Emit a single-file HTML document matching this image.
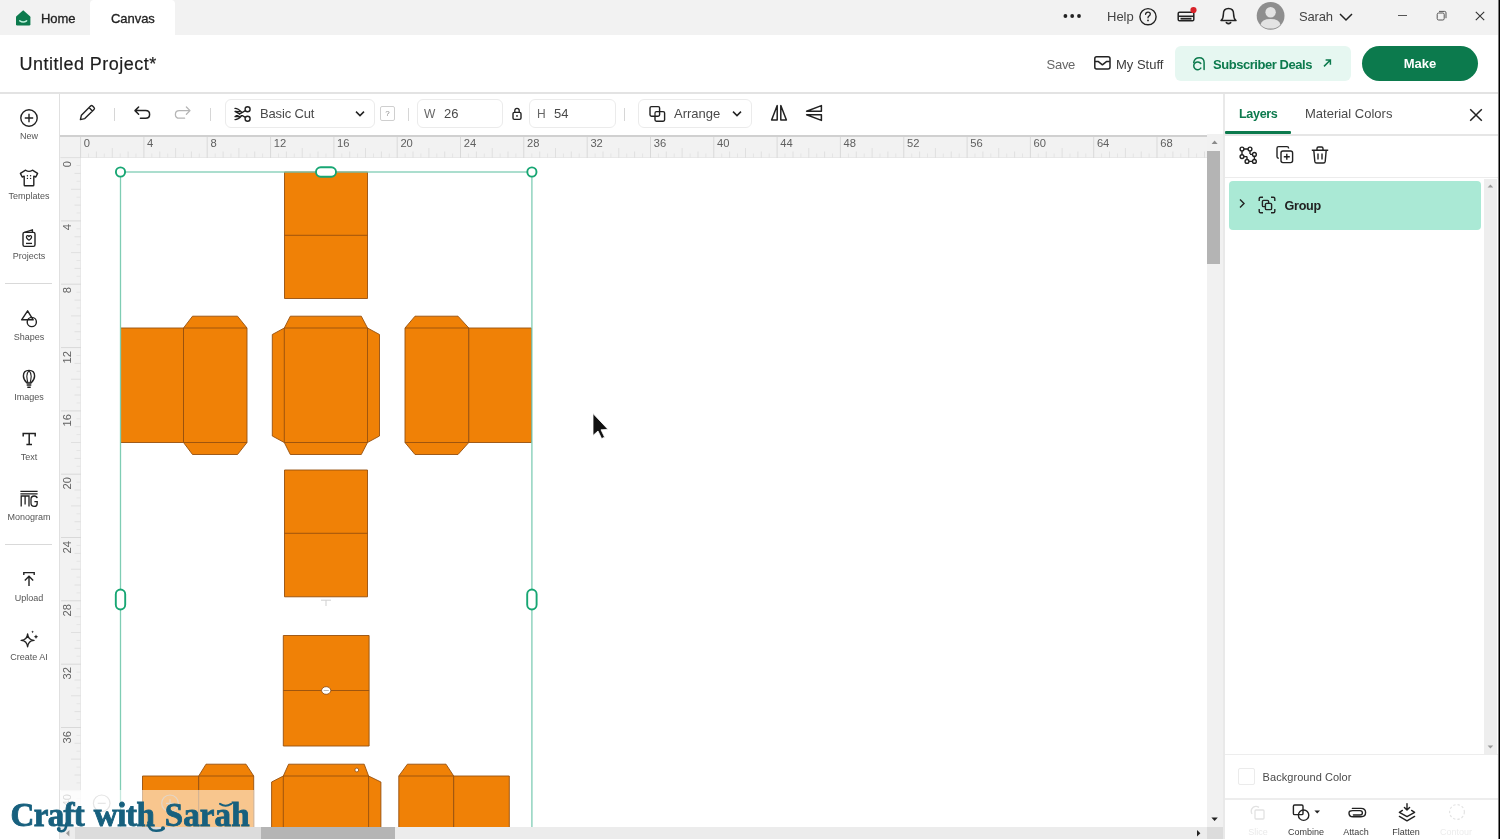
<!DOCTYPE html>
<html>
<head>
<meta charset="utf-8">
<title>Canvas</title>
<style>
*{box-sizing:border-box;margin:0;padding:0}
html,body{width:1500px;height:839px;overflow:hidden;background:#fff;font-family:"Liberation Sans",sans-serif;color:#2b2b2b}
.abs{position:absolute}
#app{position:relative;width:1500px;height:839px;overflow:hidden;will-change:transform}
/* top tab bar */
#tabbar{left:0;top:0;width:1500px;height:35px;background:#f2f2f2}
#tab-canvas{left:90px;top:0;width:85px;height:35px;background:#fff;border-radius:4px 4px 0 0}
.tabtxt{top:11.4px;font-size:13px;color:#222;letter-spacing:-0.05px;-webkit-text-stroke:0.3px currentColor}
/* header */
#header{z-index:5;left:0;top:35px;width:1500px;height:59px;background:#fff;border-bottom:2px solid #e3e3e3}
#title{left:19.6px;top:19px;font-size:18px;color:#1e1e1e;letter-spacing:0.47px;-webkit-text-stroke:0.2px #1e1e1e}
/* sidebar */
#sidebar{left:0;top:93px;width:60px;height:746px;background:#fff;border-right:1px solid #e0e0e0}
.sb-lab{left:0;width:58px;text-align:center;font-size:9px;color:#555}
.sb-ico{left:17px;width:24px;height:24px}
.sb-sep{left:5px;width:47px;height:1px;background:#d9d9d9}
/* toolbar */
#toolbar{left:60px;top:93px;width:1164px;height:42.4px;background:#fff}
.tsep{top:15px;width:1px;height:13px;background:#d6d6d6}
.tbox{top:6px;height:29px;border:1px solid #ebebeb;border-radius:6px;background:#fff}
.ttxt{font-size:13px;color:#4a4a4a;top:7px}
/* rulers */
#hruler{left:60px;top:135.2px;width:1147px;height:22.8px;background:#f2f2f2;border-top:2px solid #d0d0d0;border-bottom:1px solid #e8e8e8}
#vruler{left:60px;top:157.6px;width:20.6px;height:670px;background:#f2f2f2;border-right:1px solid #e8e8e8}
.rl{font-size:11.2px;color:#606060;line-height:13px;white-space:nowrap}
.vl{writing-mode:vertical-rl;transform:rotate(180deg);width:13px;text-align:left}
#canvas{left:80.6px;top:157.6px;width:1126px;height:670px;background:#fff;overflow:hidden}
/* scrollbars */
#vscroll{left:1207px;top:134px;width:16px;height:693px;background:#f1f1f1}
#hscroll{left:60px;top:827.2px;width:1147px;height:12px;background:#ececec}
/* right panel */
#panel{left:1223px;top:93px;width:277px;height:746px;background:#fff;border-left:2px solid #e9e9e9}
.bl{top:733.6px;width:50px;text-align:center;font-size:9px;color:#3c3c3c}
</style>
</head>
<body>
<div id="app">

<!-- TAB BAR -->
<div id="tabbar" class="abs"></div>
<div id="tab-canvas" class="abs"></div>
<!-- home icon -->
<svg class="abs" style="left:14px;top:8px" width="20" height="20" viewBox="14 8 20 20">
  <path d="M23.2 10.3 L30 16.2 Q30.4 16.6 30.4 17.2 V24.2 Q30.4 25.5 29.1 25.5 H17.3 Q16 25.5 16 24.2 V17.2 Q16 16.6 16.4 16.2 Z" fill="#0c7a4d"/>
  <path d="M19.8 20.8 Q23.2 23.2 26.6 20.8" stroke="#b9f1da" stroke-width="1.5" fill="none" stroke-linecap="round"/>
</svg>
<div class="abs tabtxt" style="left:41px">Home</div>
<div class="abs tabtxt" style="left:111px">Canvas</div>
<!-- right side of tabbar -->
<svg class="abs" style="left:1060px;top:0" width="440" height="35" viewBox="1060 0 440 35">
  <g fill="#222"><circle cx="1065.4" cy="16" r="1.9"/><circle cx="1072.2" cy="16" r="1.9"/><circle cx="1079" cy="16" r="1.9"/></g>
  <circle cx="1148" cy="16.7" r="8.1" fill="none" stroke="#222" stroke-width="1.4"/>
  <path d="M1145.6 14.3 Q1145.8 12.2 1148 12.2 Q1150.3 12.2 1150.3 14.1 Q1150.3 15.4 1148.9 16.1 Q1148 16.6 1148 17.8" fill="none" stroke="#222" stroke-width="1.3" stroke-linecap="round"/>
  <circle cx="1148" cy="20.4" r="0.9" fill="#222"/>
  <!-- machine icon -->
  <path d="M1179.5 12.2 H1192.5 Q1193.8 12.2 1193.8 13.5 V19.5 Q1193.8 20.8 1192.5 20.8 H1179.5 Q1178.2 20.8 1178.2 19.5 V13.5 Q1178.2 12.2 1179.5 12.2 Z M1178.2 16.2 H1193.8" fill="none" stroke="#222" stroke-width="1.5"/>
  <rect x="1180.5" y="17.8" width="11" height="1.8" fill="#222"/>
  <circle cx="1193.5" cy="10" r="3.1" fill="#d8232a"/>
  <!-- bell -->
  <path d="M1228.5 8.6 Q1233.6 8.6 1233.6 14 Q1233.6 18.6 1236 20.6 H1221 Q1223.4 18.6 1223.4 14 Q1223.4 8.6 1228.5 8.6 Z" fill="none" stroke="#222" stroke-width="1.5" stroke-linejoin="round"/>
  <path d="M1226.3 22.6 Q1228.5 24.6 1230.7 22.6" fill="none" stroke="#222" stroke-width="1.5" stroke-linecap="round"/>
  <!-- avatar -->
  <circle cx="1270.6" cy="15.8" r="13.9" fill="#8e8e8e"/>
  <circle cx="1270.6" cy="12.3" r="5.2" fill="#e3e3e3"/>
  <path d="M1260.6 24.7 Q1261.4 18.9 1270.6 18.9 Q1279.6 18.9 1280.4 24.7 Q1276.6 28.6 1270.6 28.6 Q1264.4 28.6 1260.6 24.7 Z" fill="#e3e3e3"/>
  <path d="M1340 14 L1346 20 L1352 14" fill="none" stroke="#222" stroke-width="1.5"/>
  <!-- window controls -->
  <path d="M1398 15.5 H1407" stroke="#555" stroke-width="1"/>
  <rect x="1437.2" y="13" width="7" height="7" rx="1.4" fill="none" stroke="#555" stroke-width="1"/>
  <path d="M1439 11.4 H1444.6 Q1446 11.4 1446 12.8 V18.2" fill="none" stroke="#555" stroke-width="1"/>
  <path d="M1475.8 11.8 L1484.2 20.2 M1484.2 11.8 L1475.8 20.2" stroke="#333" stroke-width="1.1"/>
</svg>
<div class="abs" style="left:1107px;top:9.2px;font-size:13px;color:#444">Help</div>
<div class="abs" style="left:1299px;top:9.2px;font-size:13px;color:#444;letter-spacing:-0.15px">Sarah</div>
<div id="header" class="abs">
  <div id="title" class="abs">Untitled Project*</div>
  <div class="abs" style="left:1046.6px;top:21.6px;font-size:13px;color:#666;letter-spacing:-0.3px">Save</div>
  <svg class="abs" style="left:1093px;top:19px" width="20" height="18" viewBox="0 0 20 18">
    <path d="M3.6 2.8 H15 Q17 2.8 17 4.8 V13 Q17 15 15 15 H3.6 Q1.8 15 1.8 13 V4.8 Q1.8 2.8 3.6 2.8 Z" fill="none" stroke="#222" stroke-width="1.5"/>
    <path d="M2 7.6 L5.4 7.6 L9.4 10.8 L13.4 7.6 L16.8 7.6" fill="none" stroke="#222" stroke-width="1.5" stroke-linejoin="round"/>
  </svg>
  <div class="abs" style="left:1116px;top:22px;font-size:13px;color:#3c3c3c">My Stuff</div>
  <div class="abs" style="left:1175px;top:11px;width:176px;height:35px;background:#e6f7f1;border-radius:6px"></div>
  <svg class="abs" style="left:1190px;top:21px" width="16" height="16" viewBox="0 0 16 16">
    <path d="M3.7 6.4 Q4.7 1.7 9.3 1.7 Q14.1 1.7 14.1 6.6 V13.4" fill="none" stroke="#0c7a4d" stroke-width="1.5" stroke-linecap="round"/>
    <path d="M10.8 7.5 A3.9 3.9 0 1 0 10.8 12.1" fill="none" stroke="#0c7a4d" stroke-width="1.5" stroke-linecap="round"/>
  </svg>
  <div class="abs" style="left:1213px;top:22px;font-size:13px;font-weight:bold;color:#0c7a4d;letter-spacing:-0.45px">Subscriber Deals</div>
  <svg class="abs" style="left:1320.6px;top:22px" width="12" height="12" viewBox="0 0 12 12">
    <path d="M3 9.4 L9.4 3 M4.6 3 H9.4 V7.8" fill="none" stroke="#0c7a4d" stroke-width="1.5"/>
  </svg>
  <div class="abs" style="left:1362px;top:11px;width:116px;height:35px;background:#0c7a4d;border-radius:18px;color:#fff;font-weight:bold;font-size:13px;text-align:center;line-height:35px">Make</div>
</div>
<div id="sidebar" class="abs">
  <!-- New -->
  <svg class="abs sb-ico" style="top:13px" viewBox="0 0 24 24"><circle cx="12" cy="12" r="8.2" fill="none" stroke="#222" stroke-width="1.4"/><path d="M12 7.8 V16.2 M7.8 12 H16.2" stroke="#222" stroke-width="1.4"/></svg>
  <div class="abs sb-lab" style="top:38px">New</div>
  <!-- Templates -->
  <svg class="abs sb-ico" style="top:73px" viewBox="0 0 24 24"><path d="M8.6 4.2 Q12 6.6 15.4 4.2 L20.6 7.4 L18.8 11 L16.8 10.2 V19 Q16.8 19.8 16 19.8 H8 Q7.2 19.8 7.2 19 V10.2 L5.2 11 L3.4 7.4 Z" fill="none" stroke="#222" stroke-width="1.4" stroke-linejoin="round"/><circle cx="10.4" cy="9.8" r="0.7" fill="#222"/><circle cx="13.6" cy="9.8" r="0.7" fill="#222"/><circle cx="10.4" cy="12.4" r="0.7" fill="#222"/><circle cx="13.6" cy="12.4" r="0.7" fill="#222"/></svg>
  <div class="abs sb-lab" style="top:98px">Templates</div>
  <!-- Projects -->
  <svg class="abs sb-ico" style="top:133px" viewBox="0 0 24 24"><path d="M7.4 6.4 L15.4 3.8 V6.4" fill="none" stroke="#222" stroke-width="1.4" stroke-linejoin="round"/><rect x="6" y="6.4" width="12" height="14" rx="1.6" fill="none" stroke="#222" stroke-width="1.4"/><path d="M12 14.2 Q8.6 11.8 9.6 10.2 Q10.8 9 12 10.6 Q13.2 9 14.4 10.2 Q15.4 11.8 12 14.2 Z" fill="none" stroke="#222" stroke-width="1.2" stroke-linejoin="round"/><path d="M9 17.4 H15" stroke="#222" stroke-width="1.3"/></svg>
  <div class="abs sb-lab" style="top:158px">Projects</div>
  <div class="abs sb-sep" style="top:190px"></div>
  <!-- Shapes -->
  <svg class="abs sb-ico" style="top:214px" viewBox="0 0 24 24"><path d="M10.6 3.8 L16.2 12.8 H4.6 Z" fill="none" stroke="#222" stroke-width="1.4" stroke-linejoin="round"/><circle cx="14.8" cy="15" r="4.6" fill="none" stroke="#222" stroke-width="1.4"/></svg>
  <div class="abs sb-lab" style="top:239px">Shapes</div>
  <!-- Images -->
  <svg class="abs sb-ico" style="top:274px" viewBox="0 0 24 24"><path d="M12 3.4 Q17.6 3.4 17.6 9 Q17.6 12.6 14 16 H10 Q6.4 12.6 6.4 9 Q6.4 3.4 12 3.4 Z" fill="none" stroke="#222" stroke-width="1.4"/><path d="M12 3.6 Q9.6 6 9.8 9.4 Q10 13 11 16 M12 3.6 Q14.4 6 14.2 9.4 Q14 13 13 16" fill="none" stroke="#222" stroke-width="1.1"/><path d="M10.2 18 H13.8 M10.8 20.2 H13.2" stroke="#222" stroke-width="1.4" stroke-linecap="round"/></svg>
  <div class="abs sb-lab" style="top:299px">Images</div>
  <!-- Text -->
  <svg class="abs" style="left:17px;top:334px" width="24" height="24" viewBox="0 0 24 24"><path d="M6.2 9.6 V6.4 H18.2 V9.6 M12.2 6.4 V17.6 M9.4 17.6 H15" fill="none" stroke="#222" stroke-width="1.5"/></svg>
  <div class="abs sb-lab" style="top:359px">Text</div>
  <!-- Monogram -->
  <svg class="abs sb-ico" style="top:394px" viewBox="0 0 24 24"><path d="M3.4 4.4 H20.6 M3.4 6.8 H20.6" stroke="#222" stroke-width="1.2"/><path d="M4.2 19.4 V9 H12 V19.4 M8.1 9 V17.4" fill="none" stroke="#222" stroke-width="1.3"/><path d="M20.2 11.2 Q19.8 9 17.2 9 Q14 9 14 12.4 V16 Q14 19.4 17.2 19.4 Q20.2 19.4 20.2 16.4 V14.6 H17.4" fill="none" stroke="#222" stroke-width="1.3"/></svg>
  <div class="abs sb-lab" style="top:419px">Monogram</div>
  <div class="abs sb-sep" style="top:451px"></div>
  <!-- Upload -->
  <svg class="abs sb-ico" style="top:474px" viewBox="0 0 24 24"><path d="M6.8 8 V5.6 H17.2 V8" fill="none" stroke="#222" stroke-width="1.4"/><path d="M12 19 V9.4 M7.8 13.4 L12 9.2 L16.2 13.4" fill="none" stroke="#222" stroke-width="1.4"/></svg>
  <div class="abs sb-lab" style="top:500px">Upload</div>
  <!-- Create AI -->
  <svg class="abs sb-ico" style="top:534px" viewBox="0 0 24 24"><path d="M10.6 7 Q11 12.8 17 13.4 Q11 14 10.6 19.8 Q10.2 14 4.2 13.4 Q10.2 12.8 10.6 7 Z" fill="none" stroke="#222" stroke-width="1.4" stroke-linejoin="round"/><path d="M15.6 3.4 Q15.8 4.6 17 4.8 Q15.8 5 15.6 6.2 Q15.4 5 14.2 4.8 Q15.4 4.6 15.6 3.4 Z M19 7.6 Q19.3 9.5 21.2 9.8 Q19.3 10.1 19 12 Q18.7 10.1 16.8 9.8 Q18.7 9.5 19 7.6 Z" fill="#222"/></svg>
  <div class="abs sb-lab" style="top:559px">Create AI</div>
</div>
<div id="toolbar" class="abs">
  <!-- pencil -->
  <svg class="abs" style="left:16px;top:9px" width="22" height="22" viewBox="0 0 22 22"><path d="M4.4 17.6 L5.4 13.2 L14.6 4 Q15.6 3 16.6 4 L18 5.4 Q19 6.4 18 7.4 L8.8 16.6 Z M13 5.6 L16.4 9" fill="none" stroke="#222" stroke-width="1.4" stroke-linejoin="round"/></svg>
  <div class="abs tsep" style="left:54px"></div>
  <!-- undo -->
  <svg class="abs" style="left:72px;top:10px" width="22" height="20" viewBox="0 0 22 20"><path d="M6.6 4 L3 7.6 L6.6 11.2 M3.4 7.6 H13.6 Q17.6 7.6 17.6 11.4 Q17.6 15.2 13.6 15.2 H8.4" fill="none" stroke="#222" stroke-width="1.5" stroke-linecap="round" stroke-linejoin="round"/></svg>
  <!-- redo -->
  <svg class="abs" style="left:111px;top:10px" width="22" height="20" viewBox="0 0 22 20"><path d="M15.4 4 L19 7.6 L15.4 11.2 M18.6 7.6 H8.4 Q4.4 7.6 4.4 11.4 Q4.4 15.2 8.4 15.2 H13.6" fill="none" stroke="#b5b5b5" stroke-width="1.3" stroke-linecap="round" stroke-linejoin="round"/></svg>
  <div class="abs tsep" style="left:150px"></div>
  <!-- basic cut -->
  <div class="abs tbox" style="left:165px;width:150px"></div>
  <svg class="abs" style="left:172px;top:11px" width="22" height="20" viewBox="0 0 22 20"><circle cx="15.6" cy="5.2" r="2.5" fill="none" stroke="#222" stroke-width="1.4"/><circle cx="15.6" cy="14.8" r="2.5" fill="none" stroke="#222" stroke-width="1.4"/><path d="M13.4 6.6 L3 12.6 L7.4 12.4 M13.4 13.4 L3 7.4 L7.4 7.6 M3 4.4 Q6 4.2 9.4 8 M3 15.6 Q6 15.8 9.4 12" fill="none" stroke="#222" stroke-width="1.3" stroke-linecap="round" stroke-linejoin="round"/></svg>
  <div class="abs ttxt" style="left:200px;top:13px;letter-spacing:-0.15px">Basic Cut</div>
  <svg class="abs" style="left:294px;top:16px" width="12" height="10" viewBox="0 0 12 10"><path d="M2 2.6 L6 6.6 L10 2.6" fill="none" stroke="#222" stroke-width="1.5"/></svg>
  <div class="abs" style="left:320px;top:13px;width:15px;height:15px;border:1px solid #cfcfcf;border-radius:2px;font-size:8px;color:#888;text-align:center;line-height:13px">?</div>
  <div class="abs tsep" style="left:348px"></div>
  <!-- W -->
  <div class="abs tbox" style="left:357px;width:86px"></div>
  <div class="abs ttxt" style="left:364px;top:14px;font-size:12px;color:#666">W</div>
  <div class="abs ttxt" style="left:384px;top:13px">26</div>
  <!-- lock -->
  <svg class="abs" style="left:450.2px;top:12.6px" width="14" height="16" viewBox="0 0 14 16"><rect x="3" y="6.4" width="8" height="7" rx="1.4" fill="none" stroke="#222" stroke-width="1.4"/><path d="M4.8 6.4 V4.6 Q4.8 2.4 7 2.4 Q9.2 2.4 9.2 4.6 V6.4" fill="none" stroke="#222" stroke-width="1.3"/><circle cx="7" cy="9.9" r="0.9" fill="#222"/></svg>
  <!-- H -->
  <div class="abs tbox" style="left:469px;width:87px"></div>
  <div class="abs ttxt" style="left:477px;top:14px;font-size:12px;color:#666">H</div>
  <div class="abs ttxt" style="left:494px;top:13px">54</div>
  <div class="abs tsep" style="left:564px"></div>
  <!-- arrange -->
  <div class="abs tbox" style="left:578px;width:114px"></div>
  <svg class="abs" style="left:587px;top:11px" width="20" height="20" viewBox="0 0 20 20"><rect x="8" y="7.6" width="9.6" height="9.6" rx="1.4" fill="none" stroke="#222" stroke-width="1.4"/><rect x="3" y="2.6" width="9.6" height="9.6" rx="1.4" fill="#fff" stroke="#222" stroke-width="1.4"/><path d="M8 12.2 V9 Q8 7.6 9.4 7.6 H12.6" fill="none" stroke="#222" stroke-width="1.2"/></svg>
  <div class="abs ttxt" style="left:614px;top:13px">Arrange</div>
  <svg class="abs" style="left:671px;top:16px" width="12" height="10" viewBox="0 0 12 10"><path d="M2 2.6 L6 6.6 L10 2.6" fill="none" stroke="#222" stroke-width="1.5"/></svg>
  <!-- flip icons -->
  <svg class="abs" style="left:709px;top:10px" width="20" height="20" viewBox="0 0 20 20"><path d="M8.2 2.6 V17 H2.6 Z M11.8 2.6 V17 H17.4 Z" fill="none" stroke="#222" stroke-width="1.5" stroke-linejoin="round"/></svg>
  <svg class="abs" style="left:744px;top:10px" width="20" height="20" viewBox="0 0 20 20"><path d="M2.6 8.2 H17.4 V2.6 Z M2.6 11.8 H17.4 V17.4 Z" fill="none" stroke="#222" stroke-width="1.5" stroke-linejoin="round"/></svg>
</div>
<div id="hruler" class="abs"></div>
<div id="vruler" class="abs"></div>
<div id="canvas" class="abs"></div>
<!-- RULERS -->
<svg class="abs" style="left:0;top:0" width="1500" height="839" viewBox="0 0 1500 839">
<defs><clipPath id="hr"><rect x="80" y="137" width="1127" height="21"/></clipPath><clipPath id="vr"><rect x="60" y="157.6" width="21" height="670"/></clipPath></defs>
<g clip-path="url(#hr)" stroke="#e0e0e0" stroke-width="1">
<line x1="80.6" y1="137" x2="80.6" y2="158" stroke="#d9d9d9"/>
<line x1="88.5" y1="153.5" x2="88.5" y2="158" stroke="#e5e5e5"/>
<line x1="96.4" y1="151.5" x2="96.4" y2="158"/>
<line x1="104.3" y1="153.5" x2="104.3" y2="158" stroke="#e5e5e5"/>
<line x1="112.3" y1="148" x2="112.3" y2="158"/>
<line x1="120.2" y1="153.5" x2="120.2" y2="158" stroke="#e5e5e5"/>
<line x1="128.1" y1="151.5" x2="128.1" y2="158"/>
<line x1="136.0" y1="153.5" x2="136.0" y2="158" stroke="#e5e5e5"/>
<line x1="143.9" y1="137" x2="143.9" y2="158" stroke="#d9d9d9"/>
<line x1="151.8" y1="153.5" x2="151.8" y2="158" stroke="#e5e5e5"/>
<line x1="159.8" y1="151.5" x2="159.8" y2="158"/>
<line x1="167.7" y1="153.5" x2="167.7" y2="158" stroke="#e5e5e5"/>
<line x1="175.6" y1="148" x2="175.6" y2="158"/>
<line x1="183.5" y1="153.5" x2="183.5" y2="158" stroke="#e5e5e5"/>
<line x1="191.4" y1="151.5" x2="191.4" y2="158"/>
<line x1="199.3" y1="153.5" x2="199.3" y2="158" stroke="#e5e5e5"/>
<line x1="207.2" y1="137" x2="207.2" y2="158" stroke="#d9d9d9"/>
<line x1="215.2" y1="153.5" x2="215.2" y2="158" stroke="#e5e5e5"/>
<line x1="223.1" y1="151.5" x2="223.1" y2="158"/>
<line x1="231.0" y1="153.5" x2="231.0" y2="158" stroke="#e5e5e5"/>
<line x1="238.9" y1="148" x2="238.9" y2="158"/>
<line x1="246.8" y1="153.5" x2="246.8" y2="158" stroke="#e5e5e5"/>
<line x1="254.7" y1="151.5" x2="254.7" y2="158"/>
<line x1="262.6" y1="153.5" x2="262.6" y2="158" stroke="#e5e5e5"/>
<line x1="270.6" y1="137" x2="270.6" y2="158" stroke="#d9d9d9"/>
<line x1="278.5" y1="153.5" x2="278.5" y2="158" stroke="#e5e5e5"/>
<line x1="286.4" y1="151.5" x2="286.4" y2="158"/>
<line x1="294.3" y1="153.5" x2="294.3" y2="158" stroke="#e5e5e5"/>
<line x1="302.2" y1="148" x2="302.2" y2="158"/>
<line x1="310.1" y1="153.5" x2="310.1" y2="158" stroke="#e5e5e5"/>
<line x1="318.0" y1="151.5" x2="318.0" y2="158"/>
<line x1="326.0" y1="153.5" x2="326.0" y2="158" stroke="#e5e5e5"/>
<line x1="333.9" y1="137" x2="333.9" y2="158" stroke="#d9d9d9"/>
<line x1="341.8" y1="153.5" x2="341.8" y2="158" stroke="#e5e5e5"/>
<line x1="349.7" y1="151.5" x2="349.7" y2="158"/>
<line x1="357.6" y1="153.5" x2="357.6" y2="158" stroke="#e5e5e5"/>
<line x1="365.5" y1="148" x2="365.5" y2="158"/>
<line x1="373.5" y1="153.5" x2="373.5" y2="158" stroke="#e5e5e5"/>
<line x1="381.4" y1="151.5" x2="381.4" y2="158"/>
<line x1="389.3" y1="153.5" x2="389.3" y2="158" stroke="#e5e5e5"/>
<line x1="397.2" y1="137" x2="397.2" y2="158" stroke="#d9d9d9"/>
<line x1="405.1" y1="153.5" x2="405.1" y2="158" stroke="#e5e5e5"/>
<line x1="413.0" y1="151.5" x2="413.0" y2="158"/>
<line x1="420.9" y1="153.5" x2="420.9" y2="158" stroke="#e5e5e5"/>
<line x1="428.9" y1="148" x2="428.9" y2="158"/>
<line x1="436.8" y1="153.5" x2="436.8" y2="158" stroke="#e5e5e5"/>
<line x1="444.7" y1="151.5" x2="444.7" y2="158"/>
<line x1="452.6" y1="153.5" x2="452.6" y2="158" stroke="#e5e5e5"/>
<line x1="460.5" y1="137" x2="460.5" y2="158" stroke="#d9d9d9"/>
<line x1="468.4" y1="153.5" x2="468.4" y2="158" stroke="#e5e5e5"/>
<line x1="476.4" y1="151.5" x2="476.4" y2="158"/>
<line x1="484.3" y1="153.5" x2="484.3" y2="158" stroke="#e5e5e5"/>
<line x1="492.2" y1="148" x2="492.2" y2="158"/>
<line x1="500.1" y1="153.5" x2="500.1" y2="158" stroke="#e5e5e5"/>
<line x1="508.0" y1="151.5" x2="508.0" y2="158"/>
<line x1="515.9" y1="153.5" x2="515.9" y2="158" stroke="#e5e5e5"/>
<line x1="523.8" y1="137" x2="523.8" y2="158" stroke="#d9d9d9"/>
<line x1="531.8" y1="153.5" x2="531.8" y2="158" stroke="#e5e5e5"/>
<line x1="539.7" y1="151.5" x2="539.7" y2="158"/>
<line x1="547.6" y1="153.5" x2="547.6" y2="158" stroke="#e5e5e5"/>
<line x1="555.5" y1="148" x2="555.5" y2="158"/>
<line x1="563.4" y1="153.5" x2="563.4" y2="158" stroke="#e5e5e5"/>
<line x1="571.3" y1="151.5" x2="571.3" y2="158"/>
<line x1="579.2" y1="153.5" x2="579.2" y2="158" stroke="#e5e5e5"/>
<line x1="587.2" y1="137" x2="587.2" y2="158" stroke="#d9d9d9"/>
<line x1="595.1" y1="153.5" x2="595.1" y2="158" stroke="#e5e5e5"/>
<line x1="603.0" y1="151.5" x2="603.0" y2="158"/>
<line x1="610.9" y1="153.5" x2="610.9" y2="158" stroke="#e5e5e5"/>
<line x1="618.8" y1="148" x2="618.8" y2="158"/>
<line x1="626.7" y1="153.5" x2="626.7" y2="158" stroke="#e5e5e5"/>
<line x1="634.6" y1="151.5" x2="634.6" y2="158"/>
<line x1="642.6" y1="153.5" x2="642.6" y2="158" stroke="#e5e5e5"/>
<line x1="650.5" y1="137" x2="650.5" y2="158" stroke="#d9d9d9"/>
<line x1="658.4" y1="153.5" x2="658.4" y2="158" stroke="#e5e5e5"/>
<line x1="666.3" y1="151.5" x2="666.3" y2="158"/>
<line x1="674.2" y1="153.5" x2="674.2" y2="158" stroke="#e5e5e5"/>
<line x1="682.1" y1="148" x2="682.1" y2="158"/>
<line x1="690.1" y1="153.5" x2="690.1" y2="158" stroke="#e5e5e5"/>
<line x1="698.0" y1="151.5" x2="698.0" y2="158"/>
<line x1="705.9" y1="153.5" x2="705.9" y2="158" stroke="#e5e5e5"/>
<line x1="713.8" y1="137" x2="713.8" y2="158" stroke="#d9d9d9"/>
<line x1="721.7" y1="153.5" x2="721.7" y2="158" stroke="#e5e5e5"/>
<line x1="729.6" y1="151.5" x2="729.6" y2="158"/>
<line x1="737.5" y1="153.5" x2="737.5" y2="158" stroke="#e5e5e5"/>
<line x1="745.5" y1="148" x2="745.5" y2="158"/>
<line x1="753.4" y1="153.5" x2="753.4" y2="158" stroke="#e5e5e5"/>
<line x1="761.3" y1="151.5" x2="761.3" y2="158"/>
<line x1="769.2" y1="153.5" x2="769.2" y2="158" stroke="#e5e5e5"/>
<line x1="777.1" y1="137" x2="777.1" y2="158" stroke="#d9d9d9"/>
<line x1="785.0" y1="153.5" x2="785.0" y2="158" stroke="#e5e5e5"/>
<line x1="793.0" y1="151.5" x2="793.0" y2="158"/>
<line x1="800.9" y1="153.5" x2="800.9" y2="158" stroke="#e5e5e5"/>
<line x1="808.8" y1="148" x2="808.8" y2="158"/>
<line x1="816.7" y1="153.5" x2="816.7" y2="158" stroke="#e5e5e5"/>
<line x1="824.6" y1="151.5" x2="824.6" y2="158"/>
<line x1="832.5" y1="153.5" x2="832.5" y2="158" stroke="#e5e5e5"/>
<line x1="840.4" y1="137" x2="840.4" y2="158" stroke="#d9d9d9"/>
<line x1="848.4" y1="153.5" x2="848.4" y2="158" stroke="#e5e5e5"/>
<line x1="856.3" y1="151.5" x2="856.3" y2="158"/>
<line x1="864.2" y1="153.5" x2="864.2" y2="158" stroke="#e5e5e5"/>
<line x1="872.1" y1="148" x2="872.1" y2="158"/>
<line x1="880.0" y1="153.5" x2="880.0" y2="158" stroke="#e5e5e5"/>
<line x1="887.9" y1="151.5" x2="887.9" y2="158"/>
<line x1="895.8" y1="153.5" x2="895.8" y2="158" stroke="#e5e5e5"/>
<line x1="903.8" y1="137" x2="903.8" y2="158" stroke="#d9d9d9"/>
<line x1="911.7" y1="153.5" x2="911.7" y2="158" stroke="#e5e5e5"/>
<line x1="919.6" y1="151.5" x2="919.6" y2="158"/>
<line x1="927.5" y1="153.5" x2="927.5" y2="158" stroke="#e5e5e5"/>
<line x1="935.4" y1="148" x2="935.4" y2="158"/>
<line x1="943.3" y1="153.5" x2="943.3" y2="158" stroke="#e5e5e5"/>
<line x1="951.2" y1="151.5" x2="951.2" y2="158"/>
<line x1="959.2" y1="153.5" x2="959.2" y2="158" stroke="#e5e5e5"/>
<line x1="967.1" y1="137" x2="967.1" y2="158" stroke="#d9d9d9"/>
<line x1="975.0" y1="153.5" x2="975.0" y2="158" stroke="#e5e5e5"/>
<line x1="982.9" y1="151.5" x2="982.9" y2="158"/>
<line x1="990.8" y1="153.5" x2="990.8" y2="158" stroke="#e5e5e5"/>
<line x1="998.7" y1="148" x2="998.7" y2="158"/>
<line x1="1006.7" y1="153.5" x2="1006.7" y2="158" stroke="#e5e5e5"/>
<line x1="1014.6" y1="151.5" x2="1014.6" y2="158"/>
<line x1="1022.5" y1="153.5" x2="1022.5" y2="158" stroke="#e5e5e5"/>
<line x1="1030.4" y1="137" x2="1030.4" y2="158" stroke="#d9d9d9"/>
<line x1="1038.3" y1="153.5" x2="1038.3" y2="158" stroke="#e5e5e5"/>
<line x1="1046.2" y1="151.5" x2="1046.2" y2="158"/>
<line x1="1054.1" y1="153.5" x2="1054.1" y2="158" stroke="#e5e5e5"/>
<line x1="1062.1" y1="148" x2="1062.1" y2="158"/>
<line x1="1070.0" y1="153.5" x2="1070.0" y2="158" stroke="#e5e5e5"/>
<line x1="1077.9" y1="151.5" x2="1077.9" y2="158"/>
<line x1="1085.8" y1="153.5" x2="1085.8" y2="158" stroke="#e5e5e5"/>
<line x1="1093.7" y1="137" x2="1093.7" y2="158" stroke="#d9d9d9"/>
<line x1="1101.6" y1="153.5" x2="1101.6" y2="158" stroke="#e5e5e5"/>
<line x1="1109.5" y1="151.5" x2="1109.5" y2="158"/>
<line x1="1117.5" y1="153.5" x2="1117.5" y2="158" stroke="#e5e5e5"/>
<line x1="1125.4" y1="148" x2="1125.4" y2="158"/>
<line x1="1133.3" y1="153.5" x2="1133.3" y2="158" stroke="#e5e5e5"/>
<line x1="1141.2" y1="151.5" x2="1141.2" y2="158"/>
<line x1="1149.1" y1="153.5" x2="1149.1" y2="158" stroke="#e5e5e5"/>
<line x1="1157.0" y1="137" x2="1157.0" y2="158" stroke="#d9d9d9"/>
<line x1="1165.0" y1="153.5" x2="1165.0" y2="158" stroke="#e5e5e5"/>
<line x1="1172.9" y1="151.5" x2="1172.9" y2="158"/>
<line x1="1180.8" y1="153.5" x2="1180.8" y2="158" stroke="#e5e5e5"/>
<line x1="1188.7" y1="148" x2="1188.7" y2="158"/>
<line x1="1196.6" y1="153.5" x2="1196.6" y2="158" stroke="#e5e5e5"/>
<line x1="1204.5" y1="151.5" x2="1204.5" y2="158"/>
<line x1="1212.4" y1="153.5" x2="1212.4" y2="158" stroke="#e5e5e5"/>
<line x1="1220.4" y1="137" x2="1220.4" y2="158" stroke="#d9d9d9"/>
<line x1="1228.3" y1="153.5" x2="1228.3" y2="158" stroke="#e5e5e5"/>
<line x1="1236.2" y1="151.5" x2="1236.2" y2="158"/>
<line x1="1244.1" y1="153.5" x2="1244.1" y2="158" stroke="#e5e5e5"/>
<line x1="1252.0" y1="148" x2="1252.0" y2="158"/>
<line x1="1259.9" y1="153.5" x2="1259.9" y2="158" stroke="#e5e5e5"/>
</g>
<g clip-path="url(#vr)" stroke="#e0e0e0" stroke-width="1">
<line x1="61" y1="157.6" x2="81" y2="157.6" stroke="#d9d9d9"/>
<line x1="76.5" y1="165.5" x2="81" y2="165.5" stroke="#e5e5e5"/>
<line x1="74.5" y1="173.4" x2="81" y2="173.4"/>
<line x1="76.5" y1="181.3" x2="81" y2="181.3" stroke="#e5e5e5"/>
<line x1="71" y1="189.3" x2="81" y2="189.3"/>
<line x1="76.5" y1="197.2" x2="81" y2="197.2" stroke="#e5e5e5"/>
<line x1="74.5" y1="205.1" x2="81" y2="205.1"/>
<line x1="76.5" y1="213.0" x2="81" y2="213.0" stroke="#e5e5e5"/>
<line x1="61" y1="220.9" x2="81" y2="220.9" stroke="#d9d9d9"/>
<line x1="76.5" y1="228.8" x2="81" y2="228.8" stroke="#e5e5e5"/>
<line x1="74.5" y1="236.8" x2="81" y2="236.8"/>
<line x1="76.5" y1="244.7" x2="81" y2="244.7" stroke="#e5e5e5"/>
<line x1="71" y1="252.6" x2="81" y2="252.6"/>
<line x1="76.5" y1="260.5" x2="81" y2="260.5" stroke="#e5e5e5"/>
<line x1="74.5" y1="268.4" x2="81" y2="268.4"/>
<line x1="76.5" y1="276.3" x2="81" y2="276.3" stroke="#e5e5e5"/>
<line x1="61" y1="284.2" x2="81" y2="284.2" stroke="#d9d9d9"/>
<line x1="76.5" y1="292.2" x2="81" y2="292.2" stroke="#e5e5e5"/>
<line x1="74.5" y1="300.1" x2="81" y2="300.1"/>
<line x1="76.5" y1="308.0" x2="81" y2="308.0" stroke="#e5e5e5"/>
<line x1="71" y1="315.9" x2="81" y2="315.9"/>
<line x1="76.5" y1="323.8" x2="81" y2="323.8" stroke="#e5e5e5"/>
<line x1="74.5" y1="331.7" x2="81" y2="331.7"/>
<line x1="76.5" y1="339.6" x2="81" y2="339.6" stroke="#e5e5e5"/>
<line x1="61" y1="347.6" x2="81" y2="347.6" stroke="#d9d9d9"/>
<line x1="76.5" y1="355.5" x2="81" y2="355.5" stroke="#e5e5e5"/>
<line x1="74.5" y1="363.4" x2="81" y2="363.4"/>
<line x1="76.5" y1="371.3" x2="81" y2="371.3" stroke="#e5e5e5"/>
<line x1="71" y1="379.2" x2="81" y2="379.2"/>
<line x1="76.5" y1="387.1" x2="81" y2="387.1" stroke="#e5e5e5"/>
<line x1="74.5" y1="395.0" x2="81" y2="395.0"/>
<line x1="76.5" y1="403.0" x2="81" y2="403.0" stroke="#e5e5e5"/>
<line x1="61" y1="410.9" x2="81" y2="410.9" stroke="#d9d9d9"/>
<line x1="76.5" y1="418.8" x2="81" y2="418.8" stroke="#e5e5e5"/>
<line x1="74.5" y1="426.7" x2="81" y2="426.7"/>
<line x1="76.5" y1="434.6" x2="81" y2="434.6" stroke="#e5e5e5"/>
<line x1="71" y1="442.5" x2="81" y2="442.5"/>
<line x1="76.5" y1="450.5" x2="81" y2="450.5" stroke="#e5e5e5"/>
<line x1="74.5" y1="458.4" x2="81" y2="458.4"/>
<line x1="76.5" y1="466.3" x2="81" y2="466.3" stroke="#e5e5e5"/>
<line x1="61" y1="474.2" x2="81" y2="474.2" stroke="#d9d9d9"/>
<line x1="76.5" y1="482.1" x2="81" y2="482.1" stroke="#e5e5e5"/>
<line x1="74.5" y1="490.0" x2="81" y2="490.0"/>
<line x1="76.5" y1="497.9" x2="81" y2="497.9" stroke="#e5e5e5"/>
<line x1="71" y1="505.9" x2="81" y2="505.9"/>
<line x1="76.5" y1="513.8" x2="81" y2="513.8" stroke="#e5e5e5"/>
<line x1="74.5" y1="521.7" x2="81" y2="521.7"/>
<line x1="76.5" y1="529.6" x2="81" y2="529.6" stroke="#e5e5e5"/>
<line x1="61" y1="537.5" x2="81" y2="537.5" stroke="#d9d9d9"/>
<line x1="76.5" y1="545.4" x2="81" y2="545.4" stroke="#e5e5e5"/>
<line x1="74.5" y1="553.4" x2="81" y2="553.4"/>
<line x1="76.5" y1="561.3" x2="81" y2="561.3" stroke="#e5e5e5"/>
<line x1="71" y1="569.2" x2="81" y2="569.2"/>
<line x1="76.5" y1="577.1" x2="81" y2="577.1" stroke="#e5e5e5"/>
<line x1="74.5" y1="585.0" x2="81" y2="585.0"/>
<line x1="76.5" y1="592.9" x2="81" y2="592.9" stroke="#e5e5e5"/>
<line x1="61" y1="600.8" x2="81" y2="600.8" stroke="#d9d9d9"/>
<line x1="76.5" y1="608.8" x2="81" y2="608.8" stroke="#e5e5e5"/>
<line x1="74.5" y1="616.7" x2="81" y2="616.7"/>
<line x1="76.5" y1="624.6" x2="81" y2="624.6" stroke="#e5e5e5"/>
<line x1="71" y1="632.5" x2="81" y2="632.5"/>
<line x1="76.5" y1="640.4" x2="81" y2="640.4" stroke="#e5e5e5"/>
<line x1="74.5" y1="648.3" x2="81" y2="648.3"/>
<line x1="76.5" y1="656.2" x2="81" y2="656.2" stroke="#e5e5e5"/>
<line x1="61" y1="664.2" x2="81" y2="664.2" stroke="#d9d9d9"/>
<line x1="76.5" y1="672.1" x2="81" y2="672.1" stroke="#e5e5e5"/>
<line x1="74.5" y1="680.0" x2="81" y2="680.0"/>
<line x1="76.5" y1="687.9" x2="81" y2="687.9" stroke="#e5e5e5"/>
<line x1="71" y1="695.8" x2="81" y2="695.8"/>
<line x1="76.5" y1="703.7" x2="81" y2="703.7" stroke="#e5e5e5"/>
<line x1="74.5" y1="711.6" x2="81" y2="711.6"/>
<line x1="76.5" y1="719.6" x2="81" y2="719.6" stroke="#e5e5e5"/>
<line x1="61" y1="727.5" x2="81" y2="727.5" stroke="#d9d9d9"/>
<line x1="76.5" y1="735.4" x2="81" y2="735.4" stroke="#e5e5e5"/>
<line x1="74.5" y1="743.3" x2="81" y2="743.3"/>
<line x1="76.5" y1="751.2" x2="81" y2="751.2" stroke="#e5e5e5"/>
<line x1="71" y1="759.1" x2="81" y2="759.1"/>
<line x1="76.5" y1="767.1" x2="81" y2="767.1" stroke="#e5e5e5"/>
<line x1="74.5" y1="775.0" x2="81" y2="775.0"/>
<line x1="76.5" y1="782.9" x2="81" y2="782.9" stroke="#e5e5e5"/>
<line x1="61" y1="790.8" x2="81" y2="790.8" stroke="#d9d9d9"/>
<line x1="76.5" y1="798.7" x2="81" y2="798.7" stroke="#e5e5e5"/>
<line x1="74.5" y1="806.6" x2="81" y2="806.6"/>
<line x1="76.5" y1="814.5" x2="81" y2="814.5" stroke="#e5e5e5"/>
<line x1="71" y1="822.5" x2="81" y2="822.5"/>
<line x1="76.5" y1="830.4" x2="81" y2="830.4" stroke="#e5e5e5"/>
<line x1="74.5" y1="838.3" x2="81" y2="838.3"/>
<line x1="76.5" y1="846.2" x2="81" y2="846.2" stroke="#e5e5e5"/>
<line x1="61" y1="854.1" x2="81" y2="854.1" stroke="#d9d9d9"/>
<line x1="76.5" y1="862.0" x2="81" y2="862.0" stroke="#e5e5e5"/>
</g>
</svg>
<div class="abs rl" style="left:83.8px;top:137px">0</div>
<div class="abs rl" style="left:147.1px;top:137px">4</div>
<div class="abs rl" style="left:210.4px;top:137px">8</div>
<div class="abs rl" style="left:273.8px;top:137px">12</div>
<div class="abs rl" style="left:337.1px;top:137px">16</div>
<div class="abs rl" style="left:400.4px;top:137px">20</div>
<div class="abs rl" style="left:463.7px;top:137px">24</div>
<div class="abs rl" style="left:527.0px;top:137px">28</div>
<div class="abs rl" style="left:590.4px;top:137px">32</div>
<div class="abs rl" style="left:653.7px;top:137px">36</div>
<div class="abs rl" style="left:717.0px;top:137px">40</div>
<div class="abs rl" style="left:780.3px;top:137px">44</div>
<div class="abs rl" style="left:843.6px;top:137px">48</div>
<div class="abs rl" style="left:907.0px;top:137px">52</div>
<div class="abs rl" style="left:970.3px;top:137px">56</div>
<div class="abs rl" style="left:1033.6px;top:137px">60</div>
<div class="abs rl" style="left:1096.9px;top:137px">64</div>
<div class="abs rl" style="left:1160.2px;top:137px">68</div>
<div class="abs rl vl" style="left:61px;top:160.8px">0</div>
<div class="abs rl vl" style="left:61px;top:224.1px">4</div>
<div class="abs rl vl" style="left:61px;top:287.4px">8</div>
<div class="abs rl vl" style="left:61px;top:350.8px">12</div>
<div class="abs rl vl" style="left:61px;top:414.1px">16</div>
<div class="abs rl vl" style="left:61px;top:477.4px">20</div>
<div class="abs rl vl" style="left:61px;top:540.7px">24</div>
<div class="abs rl vl" style="left:61px;top:604.0px">28</div>
<div class="abs rl vl" style="left:61px;top:667.4px">32</div>
<div class="abs rl vl" style="left:61px;top:730.7px">36</div>
<div class="abs rl vl" style="left:61px;top:794.0px">40</div>

<!-- CANVAS SHAPES (page coords) -->
<svg class="abs" style="left:0;top:0" width="1500" height="839" viewBox="0 0 1500 839">
<defs><clipPath id="cv"><rect x="80.6" y="157.6" width="1126" height="669.4"/></clipPath></defs>
<g clip-path="url(#cv)" fill="#f08106" stroke="#96500f" stroke-width="0.9" stroke-linejoin="round">
  <!-- row1 rect -->
  <rect x="284.5" y="172" width="83" height="126.5"/>
  <line x1="284.5" y1="235.3" x2="367.5" y2="235.3"/>
  <!-- row2 left -->
  <rect x="120.5" y="328" width="63" height="114.5"/>
  <path d="M183.5 328 L192.5 316.2 L237.5 316.2 L247 328 L247 442.5 L237.5 454.5 L192.5 454.5 L183.5 442.5 Z"/>
  <path d="M183.5 328 H247 M183.5 442.5 H247" fill="none"/>
  <!-- row2 middle -->
  <path d="M284.3 328 L290.3 316.2 L361.3 316.2 L367.5 328 L379.5 334.5 L379.5 436 L367.5 442.5 L361.3 454.5 L290.3 454.5 L284.3 442.5 L272.3 436 L272.3 334.5 Z"/>
  <rect x="284.3" y="328" width="83.2" height="114.5" fill="none"/>
  <!-- row2 right -->
  <path d="M405 328 L415 316.2 L458 316.2 L468.8 328 L468.8 442.5 L458 454.5 L415 454.5 L405 442.5 Z"/>
  <path d="M405 328 H468.8 M405 442.5 H468.8" fill="none"/>
  <rect x="468.8" y="328" width="62.7" height="114.5"/>
  <!-- row3 rect -->
  <rect x="284.5" y="470" width="83" height="126.8"/>
  <line x1="284.5" y1="533.3" x2="367.5" y2="533.3"/>
  <!-- row4 rect -->
  <rect x="283.3" y="635.5" width="85.8" height="110.5"/>
  <line x1="283.3" y1="690.5" x2="369.1" y2="690.5"/>
  <!-- row5 left -->
  <rect x="142.5" y="776" width="56.2" height="60"/>
  <path d="M198.7 776 L206 764.2 L246 764.2 L253.7 776 L253.7 840 L198.7 840 Z"/>
  <path d="M198.7 776 H253.7" fill="none"/>
  <!-- row5 middle -->
  <path d="M283.3 776 L288.6 764.2 L364.2 764.2 L368.6 776 L380.9 782 L380.9 840 L271.6 840 L271.6 782 Z"/>
  <path d="M283.3 840 V776 H368.6 V840" fill="none"/>
  <!-- row5 right -->
  <path d="M398.8 776 L407.4 764.2 L446 764.2 L453.7 776 L453.7 840 L398.8 840 Z"/>
  <path d="M398.8 776 H453.7" fill="none"/>
  <rect x="453.7" y="776" width="55.6" height="70"/>
</g>
<g clip-path="url(#cv)">
  <!-- small holes -->
  <ellipse cx="326.2" cy="690.5" rx="4.6" ry="3.8" fill="#fff" stroke="#8c4a12" stroke-width="0.8"/>
  <line x1="323.6" y1="690.5" x2="328.8" y2="690.5" stroke="#b9b9b9" stroke-width="1"/>
  <circle cx="356.8" cy="770" r="1.9" fill="#fff" stroke="#8c4a12" stroke-width="0.8"/>
  <!-- tiny T mark -->
  <path d="M321 600.2 H331 M326 600.2 V606" stroke="#cfcfcf" stroke-width="1" fill="none"/>
  <!-- selection box -->
  <rect x="120.5" y="172" width="411.4" height="700" fill="none" stroke="#7fcdb4" stroke-width="1.3"/>
  <g fill="#fff" stroke="#17a673" stroke-width="1.9">
    <circle cx="120.5" cy="172" r="4.6"/>
    <circle cx="531.9" cy="172" r="4.6"/>
    <rect x="316" y="167.3" width="20" height="9.4" rx="4.7"/>
    <rect x="115.8" y="589.5" width="9.4" height="20" rx="4.7"/>
    <rect x="527.2" y="589.5" width="9.4" height="20" rx="4.7"/>
  </g>
  <!-- mouse cursor -->
  <path d="M593 413.5 L593 435.5 L598 431 L601.6 438.6 L604.6 437.2 L601 429.8 L608 429.4 Z" fill="#111" stroke="#fff" stroke-width="0.8"/>
</g>
</svg>
<div id="vscroll" class="abs">
  <div class="abs" style="left:0.2px;top:17px;width:13px;height:113.4px;background:#b4b4b4"></div>
  <svg class="abs" style="left:0;top:0" width="16" height="16" viewBox="0 0 16 16"><path d="M4.6 10 L7.6 6.6 L10.6 10 Z" fill="#8a8a8a"/></svg>
  <svg class="abs" style="left:0;top:677px" width="16" height="16" viewBox="0 0 16 16"><path d="M4.4 6.4 L7.6 10 L10.8 6.4 Z" fill="#222"/></svg>
</div>
<div id="hscroll" class="abs">
  <div class="abs" style="left:15px;top:0;width:186px;height:12px;background:#dcdcdc"></div>
  <div class="abs" style="left:200.8px;top:0;width:134.2px;height:12px;background:#b5b5b5"></div>
  <svg class="abs" style="left:0;top:0" width="16" height="12" viewBox="0 0 16 12"><path d="M9.4 3 L6 6.2 L9.4 9.4 Z" fill="#9a9a9a"/></svg>
  <svg class="abs" style="left:1131px;top:0" width="16" height="12" viewBox="0 0 16 12"><path d="M6 3 L9.4 6.2 L6 9.4 Z" fill="#222"/></svg>
</div>
<div class="abs" style="left:1207px;top:827px;width:16px;height:12px;background:#dcdcdc"></div>
<!-- zoom overlay (semi-transparent) -->
<div class="abs" style="left:60px;top:790px;width:194px;height:37.4px;background:rgba(255,255,255,0.55)"></div>
<svg class="abs" style="left:80px;top:790px" width="140" height="37" viewBox="0 0 140 37">
  <g fill="none" stroke="#dcdcdc" stroke-width="1.2" opacity="0.75"><circle cx="21.7" cy="13.3" r="8.3"/><path d="M17.7 13.3 H25.7"/><circle cx="90" cy="13.3" r="8.3"/><path d="M86 13.3 H94 M90 9.3 V17.3"/></g>
</svg>
<div class="abs" style="left:60px;top:790px;width:20.6px;height:37.4px;background:rgba(255,255,255,0.45)"></div>
<!-- watermark -->
<svg class="abs" style="left:0;top:790px" width="270" height="49" viewBox="0 790 270 49">
  <g fill="none" stroke="#17607e" stroke-width="2.6" stroke-linecap="round">
    <path d="M66.4 823.5 Q66.4 831.2 61.4 831.2 Q58.4 831.2 58.6 829.2"/>
    <path d="M148.4 822.5 Q148.6 831 156.4 830.8 Q162.4 830.6 163 828.4"/>
    <path d="M220 803.8 Q225.6 807.6 231.2 803.8" stroke-width="2"/>
  </g>
  <g fill="#17607e"><circle cx="58.8" cy="829" r="2"/><circle cx="163" cy="828.2" r="2"/></g>
</svg>
<div id="wm" class="abs" style="left:0;top:795.2px;width:270px;height:40px;font-family:'Liberation Serif',serif;font-weight:bold;font-size:33px;line-height:40px;color:#17607e;-webkit-text-stroke:0.85px #17607e;white-space:nowrap"><span class="abs" style="left:10.6px;letter-spacing:-0.7px">Craft</span><span class="abs" style="left:93.8px;letter-spacing:-0.4px">with</span><span class="abs" style="left:164.8px;letter-spacing:0.1px">Sarah</span></div>
<div id="panel" class="abs">
  <div class="abs" style="left:14px;top:14px;font-size:12.6px;font-weight:bold;color:#0c7a4d;letter-spacing:-0.35px">Layers</div>
  <div class="abs" style="left:80px;top:13px;font-size:13px;color:#4a4a4a">Material Colors</div>
  <div class="abs" style="left:0;top:41.4px;width:275px;height:1.4px;background:#e6e6e6"></div>
  <div class="abs" style="left:0;top:38.4px;width:66px;height:3px;background:#0c7a4d;border-radius:1px"></div>
  <svg class="abs" style="left:243px;top:14px" width="16" height="16" viewBox="0 0 16 16"><path d="M2.2 2.2 L13.8 13.8 M13.8 2.2 L2.2 13.8" stroke="#222" stroke-width="1.5"/></svg>
  <!-- action icons -->
  <svg class="abs" style="left:12px;top:51px" width="22" height="22" viewBox="0 0 22 22">
    <g fill="none" stroke="#222" stroke-width="1.4"><circle cx="5" cy="5" r="1.9"/><circle cx="13" cy="5" r="1.9"/><circle cx="5" cy="12.6" r="1.9"/><circle cx="10" cy="17.4" r="1.9"/><circle cx="17.4" cy="17.4" r="1.9"/><circle cx="17.4" cy="10.4" r="1.9"/>
    <path d="M6.9 5 H11.1 M5 6.9 V10.7 M13 6.9 V10 M6.9 12.6 H10 M10 12.6 V15.5 M11.9 17.4 H15.5 M17.4 12.3 V15.5 M13 10.4 H15.5"/></g>
  </svg>
  <svg class="abs" style="left:49px;top:51px" width="22" height="22" viewBox="0 0 22 22">
    <g fill="none" stroke="#222" stroke-width="1.4"><rect x="7" y="7" width="11.6" height="11.6" rx="2"/><path d="M14.6 4.4 V4.2 Q14.6 2.6 13 2.6 H4.6 Q3 2.6 3 4.2 V12.6 Q3 14.2 4.6 14.2 H4.8"/><path d="M12.8 9.8 V15.8 M9.8 12.8 H15.8"/></g>
  </svg>
  <svg class="abs" style="left:84px;top:51px" width="22" height="22" viewBox="0 0 22 22">
    <g fill="none" stroke="#222" stroke-width="1.4" stroke-linejoin="round"><path d="M2.8 6.2 H19.2 M8 6 V4.4 Q8 3 9.4 3 H12.6 Q14 3 14 4.4 V6"/><path d="M4.8 6.4 L5.8 17.4 Q6 19 7.6 19 H14.4 Q16 19 16.2 17.4 L17.2 6.4"/><path d="M9 9.6 V15.4 M13 9.6 V15.4"/></g>
  </svg>
  <div class="abs" style="left:0;top:84px;width:275px;height:1.4px;background:#ececec"></div>
  <!-- group row -->
  <div class="abs" style="left:4px;top:88.4px;width:252px;height:48.6px;background:#aae9d5;border-radius:4px"></div>
  <svg class="abs" style="left:11px;top:104px" width="12" height="14" viewBox="0 0 12 14"><path d="M4 2.6 L8 6.6 L4 10.6" fill="none" stroke="#222" stroke-width="1.4"/></svg>
  <svg class="abs" style="left:32px;top:102px" width="20" height="20" viewBox="0 0 20 20">
    <g fill="none" stroke="#222" stroke-width="1.4"><path d="M2.2 6 V3.6 Q2.2 2.2 3.6 2.2 H6 M14 2.2 H16.4 Q17.8 2.2 17.8 3.6 V6 M17.8 14 V16.4 Q17.8 17.8 16.4 17.8 H14 M6 17.8 H3.6 Q2.2 17.8 2.2 16.4 V14"/><rect x="5.4" y="5.4" width="6.2" height="6.2" rx="1.2"/><rect x="8.4" y="8.4" width="6.2" height="6.2" rx="1.2" fill="#aae9d5"/></g>
  </svg>
  <div class="abs" style="left:59.6px;top:106px;font-size:12.6px;font-weight:bold;color:#222;letter-spacing:-0.3px">Group</div>
  <!-- panel scrollbar -->
  <div class="abs" style="left:259px;top:86px;width:13px;height:574.6px;background:#eeeeee"></div>
  <svg class="abs" style="left:259px;top:87px" width="13" height="12" viewBox="0 0 13 12"><path d="M3.6 7.6 L6.4 4.6 L9.2 7.6 Z" fill="#9a9a9a"/></svg>
  <svg class="abs" style="left:259px;top:648px" width="13" height="12" viewBox="0 0 13 12"><path d="M3.6 4.6 L6.4 7.6 L9.2 4.6 Z" fill="#9a9a9a"/></svg>
  <!-- background color -->
  <div class="abs" style="left:0;top:660.6px;width:275px;height:1.6px;background:#ededed"></div>
  <div class="abs" style="left:13px;top:675px;width:17.4px;height:17.4px;border:1px solid #ebebeb;border-radius:2px;background:#fff"></div>
  <div class="abs" style="left:37.6px;top:678px;font-size:11px;color:#4a4a4a;letter-spacing:0.05px">Background Color</div>
  <div class="abs" style="left:0;top:705px;width:275px;height:1.6px;background:#ededed"></div>
  <!-- bottom actions -->
  <svg class="abs" style="left:22px;top:709px" width="22" height="22" viewBox="0 0 22 22"><g fill="none" stroke="#e2e2e2" stroke-width="1.3"><path d="M5 12 Q3 8 6 5.4 Q9 3.4 12 5.4"/><rect x="8" y="8" width="9" height="9" rx="1"/></g></svg>
  <div class="abs bl" style="left:8px;color:#e9e9e9">Slice</div>
  <svg class="abs" style="left:65px;top:709px" width="34" height="22" viewBox="0 0 34 22"><g fill="none" stroke="#222" stroke-width="1.4"><rect x="3.4" y="3" width="9.6" height="9.6" rx="1.2"/><circle cx="13.6" cy="13.2" r="5.2"/></g><path d="M24.4 8.6 L30 8.6 L27.2 11.6 Z" fill="#222"/></svg>
  <div class="abs bl" style="left:56px">Combine</div>
  <svg class="abs" style="left:120px;top:708px" width="24" height="22" viewBox="0 0 24 22"><path d="M8.4 14 H15 Q17.4 14 17.4 11.8 Q17.4 9.6 15 9.6 H7.6 Q4 9.6 4 12 Q4 15.8 8 15.8 H16 Q20.6 15.8 20.6 11.6 Q20.6 7.4 16 7.4 H7.4" fill="none" stroke="#222" stroke-width="1.4" stroke-linecap="round"/></svg>
  <div class="abs bl" style="left:106px">Attach</div>
  <svg class="abs" style="left:170px;top:708px" width="24" height="26" viewBox="0 0 24 26"><g fill="none" stroke="#222" stroke-width="1.4" stroke-linejoin="round" stroke-linecap="round"><path d="M12 2.6 V8.6 M9.4 6.4 L12 9 L14.6 6.4"/><path d="M7.4 9.4 L4.4 11.4 L12 15.6 L19.6 11.4 L16.6 9.4"/><path d="M4.4 15.4 L12 19.8 L19.6 15.4"/></g></svg>
  <div class="abs bl" style="left:156px">Flatten</div>
  <svg class="abs" style="left:220px;top:708px" width="24" height="24" viewBox="0 0 24 24"><circle cx="12" cy="11" r="7.4" fill="none" stroke="#e4e4e4" stroke-width="1.2" stroke-dasharray="2.4 2"/></svg>
  <div class="abs bl" style="left:206px;color:#ececec">Contour</div>
</div>

<div class="abs" style="left:1498px;top:0;width:2px;height:839px;background:linear-gradient(to right,#7a7a7a 0,#7a7a7a 50%,#000 50%,#000 100%);z-index:20"></div>
</div>
</body>
</html>
